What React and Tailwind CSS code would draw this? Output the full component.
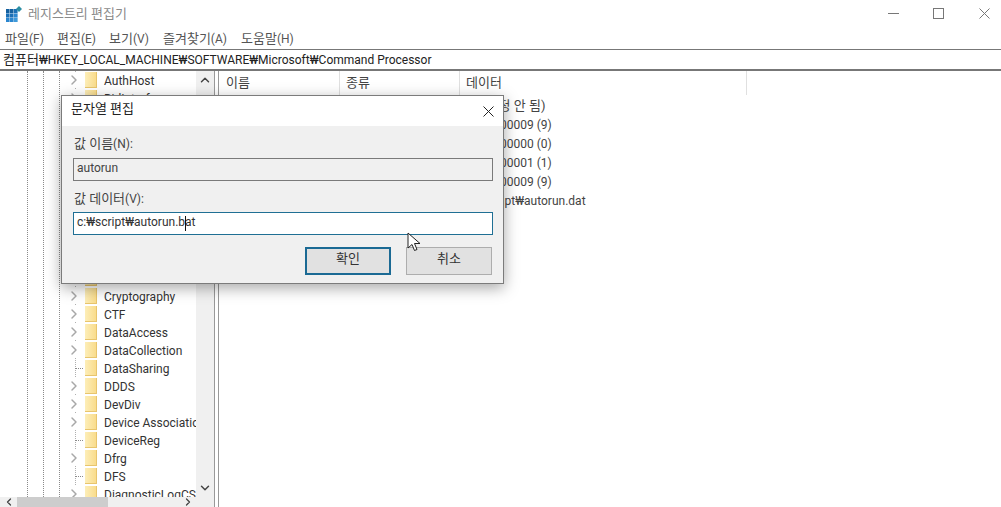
import { ChevronRight, ChevronUp, ChevronDown, ChevronLeft } from 'lucide-react'

const menus = [
  { ko: '파일', key: '(F)', width: 'w-[52px]' },
  { ko: '편집', key: '(E)', width: 'w-[52px]' },
  { ko: '보기', key: '(V)', width: 'w-[54px]' },
  { ko: '즐겨찾기', key: '(A)', width: 'w-[78px]' },
  { ko: '도움말', key: '(H)', width: 'w-[70px]' },
]

// 대화상자에 가려지는 줄은 이름을 비워둔다
const treeRows = [
  { name: 'AuthHost', arrow: true },
  { name: 'BidInterface', arrow: true },
  ...Array.from({ length: 10 }, () => ({ name: '', arrow: true })),
  { name: 'Cryptography', arrow: true },
  { name: 'CTF', arrow: true },
  { name: 'DataAccess', arrow: true },
  { name: 'DataCollection', arrow: true },
  { name: 'DataSharing', arrow: false },
  { name: 'DDDS', arrow: true },
  { name: 'DevDiv', arrow: true },
  { name: 'Device Association', arrow: true },
  { name: 'DeviceReg', arrow: false },
  { name: 'Dfrg', arrow: true },
  { name: 'DFS', arrow: false },
  { name: 'DiagnosticLogCSP', arrow: true },
]

const dataRows = ['0x00000009 (9)', '0x00000000 (0)', '0x00000001 (1)', '0x00000009 (9)', 'c:₩script₩autorun.dat']

function RegIcon() {
  return (
    <svg width="16" height="16" viewBox="0 0 16 16" className="block">
      <rect x="0" y="3" width="12" height="13" fill="#cfe3f3" />
      <rect x="0" y="3" width="3.500" height="4" fill="#14609f" />
      <rect x="4" y="3" width="3.500" height="4" fill="#14609f" />
      <rect x="8" y="3" width="3.500" height="4" fill="#1a6fb5" />
      <rect x="0" y="7.500" width="3.500" height="4" fill="#1a6fb5" />
      <rect x="4" y="7.500" width="3.500" height="4" fill="#1a6fb5" />
      <rect x="8" y="7.500" width="3.500" height="4" fill="#2a86cf" />
      <rect x="0" y="12" width="3.500" height="4" fill="#2a86cf" />
      <rect x="4" y="12" width="3.500" height="4" fill="#2a86cf" />
      <rect x="8" y="12" width="3.500" height="4" fill="#3f9ad9" />
      <path d="M13 0l3 3-3 3-3-3z" fill="#2b8ea3" />
    </svg>
  )
}

function CloseGlyph({ size, className }) {
  return (
    <svg width={size} height={size} viewBox={`0 0 ${size} ${size}`} className={className}>
      <path d={`M0.500 0.500L${size - 0.5} ${size - 0.5}M${size - 0.5} 0.500L0.500 ${size - 0.5}`} stroke="currentColor" strokeWidth="1" fill="none" />
    </svg>
  )
}

function Folder() {
  return <div className="w-[12px] h-[16px] shrink-0 bg-gradient-to-r from-[#fdeeb8] to-[#f9dc8c] border-r border-b border-[#e8c56d]" />
}

function TreeRow({ row }) {
  return (
    <div className="relative flex items-center h-[18px] whitespace-nowrap">
      <div className="w-[85px] shrink-0 flex justify-end">
        {row.arrow ? (
          <ChevronRight size={16} strokeWidth={2.2} className="text-[#a8a8a8] mr-[3px] bg-white" />
        ) : (
          <div className="w-[8px] mr-[2px] border-t border-dotted border-[#8a8a8a]" />
        )}
      </div>
      <Folder />
      <span className="ml-[7px] text-[12px] leading-[18px] pt-px text-[#333]">{row.name}</span>
    </div>
  )
}

function Cursor() {
  return (
    <svg width="14" height="20" viewBox="0 0 14 20" className="absolute left-[407px] top-[232px]">
      <path d="M1 1v15l4-3.500 2.500 6 2.500-1-2.500-6h5.500z" fill="#fff" stroke="#222" strokeWidth="1" />
    </svg>
  )
}

function Dialog() {
  return (
    <div className="absolute left-[61px] top-[95px] w-[443px] h-[189px] border border-[#7b7b7b] bg-[#f0f0f0] shadow-[0_4px_14px_rgba(0,0,0,0.35)]">
      <div className="h-[30px] bg-white flex items-center justify-between pl-[9px] pr-[9px]">
        <span className="text-[13px] leading-[26px] pb-[5px] text-[#222]">문자열 편집</span>
        <CloseGlyph size={11} className="text-[#222]" />
      </div>
      <div className="pl-[11px] pr-[10px]">
        <div className="h-[32px] pt-[9px] pl-px text-[12px] leading-[18px] text-[#444]"><span className="text-[13px]">값 이름</span>(N):</div>
        <div className="h-[23px] border border-[#7a7a7a] bg-[#f0f0f0] pl-[3px] text-[12px] leading-[18px] text-[#444]">autorun</div>
        <div className="h-[31px] pt-[9px] pl-px text-[12px] leading-[18px] text-[#444]"><span className="text-[13px]">값 데이터</span>(V):</div>
        <div className="relative h-[23px] border border-[#1f6f94] bg-white pl-[3px] text-[12px] leading-[18px] text-[#333]">
          c:₩script₩autorun.bat
          <div className="absolute left-[111px] top-[3px] w-px h-[15px] bg-[#111]" />
        </div>
        <div className="flex justify-end gap-[15px] mt-[12px] pr-px">
          <button className="w-[86px] h-[28px] border-2 border-[#1b6a94] bg-[#e1e1e1] text-[13px] leading-[20px] text-[#333] pb-[4px]">확인</button>
          <button className="w-[86px] h-[28px] border border-[#adadad] bg-[#e1e1e1] text-[13px] leading-[22px] text-[#333] pb-[4px]">취소</button>
        </div>
      </div>
    </div>
  )
}

export default function App() {
  return (
    <div className="relative w-[1001px] h-[507px] overflow-hidden bg-white flex flex-col font-['Roboto','Noto_Sans_CJK_KR',sans-serif]">
      <div className="h-[27px] flex items-center shrink-0 pl-[6px]">
        <RegIcon />
        <span className="ml-[6px] text-[13px] text-[#8a8a8a]">레지스트리 편집기</span>
        <div className="ml-auto flex items-center text-[#777]">
          <div className="w-[11px] border-t border-[#777]" />
          <div className="w-[11px] h-[11px] ml-[34px] border border-[#777]" />
          <CloseGlyph size={11} className="ml-[35px] mr-[11px]" />
        </div>
      </div>
      <div className="h-[22px] flex items-center shrink-0 pl-[5px] pt-px text-[12px] text-[#555]">
        {menus.map((m) => (
          <span key={m.ko} className={m.width}><span className="text-[13px]">{m.ko}</span>{m.key}</span>
        ))}
      </div>
      <div className="h-[22px] shrink-0 border-t border-b-2 border-[#777] pl-[3px] text-[12px] leading-[19px] text-[#222]">
        <span className="text-[13px]">컴퓨터</span>₩HKEY_LOCAL_MACHINE₩SOFTWARE₩Microsoft₩Command Processor
      </div>
      <div className="flex-1 flex min-h-0">
        <div className="w-[215px] shrink-0 flex flex-col border-r border-[#999]">
          <div className="flex-1 flex min-h-0">
            <div className="relative flex-1 min-w-0 overflow-hidden">
              <div className="absolute left-[27px] top-0 bottom-0 border-l border-dotted border-[#8a8a8a]" />
              <div className="absolute left-[43px] top-0 bottom-0 border-l border-dotted border-[#8a8a8a]" />
              <div className="absolute left-[59px] top-0 bottom-0 border-l border-dotted border-[#8a8a8a]" />
              <div className="absolute left-[75px] top-0 bottom-0 border-l border-dotted border-[#b0b0b0]" />
              {treeRows.map((row, i) => (
                <TreeRow key={i} row={row} />
              ))}
            </div>
            <div className="w-[18px] shrink-0 bg-[#f0f0f0] flex flex-col items-center justify-between pt-[2px] pb-[2px] text-[#444]">
              <ChevronUp size={14} strokeWidth={2.5} />
              <ChevronDown size={14} strokeWidth={2.5} />
            </div>
          </div>
          <div className="h-[10px] shrink-0 bg-[#f0f0f0] flex items-center text-[#444]">
            <div className="w-[17px] flex justify-center"><ChevronLeft size={12} strokeWidth={2.5} /></div>
            <div className="w-[91px] h-full bg-[#cdcdcd]" />
            <div className="flex-1 flex justify-end pr-[20px]"><ChevronRight size={12} strokeWidth={2.5} /></div>
          </div>
        </div>
        <div className="flex-1 min-w-0 ml-[3px] border-l border-[#999]">
          <div className="h-[24px] flex text-[13px] leading-[24px] text-[#444]">
            <div className="w-[121px] border-r border-[#e0e0e0] pl-[7px]">이름</div>
            <div className="w-[120px] border-r border-[#e0e0e0] pl-[6px]">종류</div>
            <div className="w-[287px] border-r border-[#e0e0e0] pl-[6px]">데이터</div>
          </div>
          <div className="pl-[248px]">
            <div className="h-[19px] text-[13px] leading-[19px] pt-px text-[#444]">(값 설정 안 됨)</div>
            {dataRows.map((d, i) => (
              <div key={i} className="h-[19px] text-[12px] leading-[19px] pt-[2px] text-[#444]">{d}</div>
            ))}
          </div>
        </div>
      </div>
      <Dialog />
      <Cursor />
    </div>
  )
}
